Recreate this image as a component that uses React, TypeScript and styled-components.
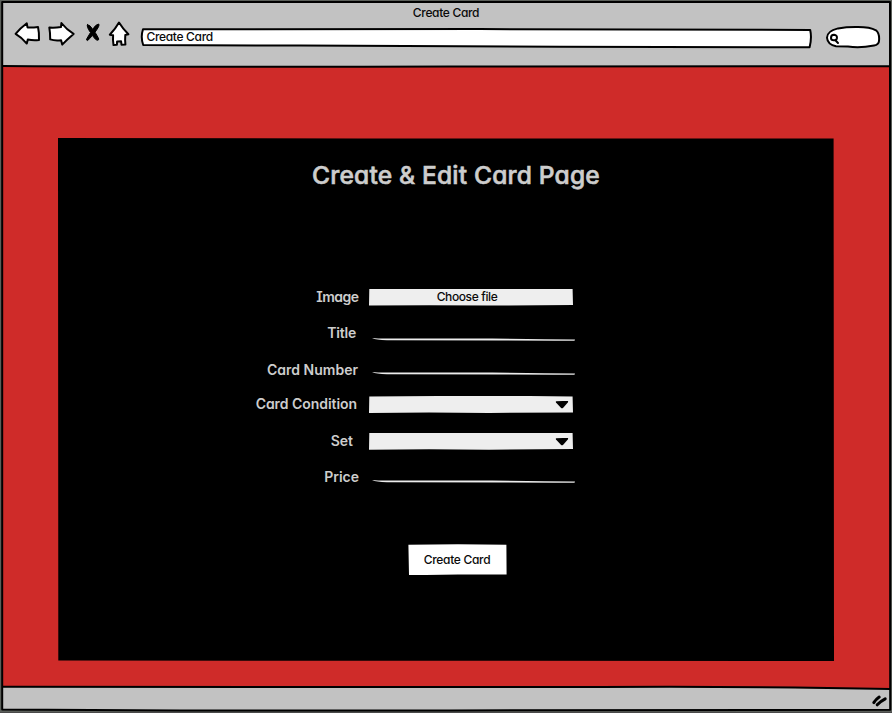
import React from "react";
import styled, { createGlobalStyle } from "styled-components";

const GlobalStyle = createGlobalStyle`
  *, *::before, *::after { box-sizing: border-box; }
  body {
    margin: 0;
    overflow: hidden;
    background: #5b5f5a;
    color: #0a0a0a;
    font-family: Inter, sans-serif;
    font-feature-settings: "cv11", "cv08";
  }
`;

const Browser = styled.div`
  position: relative;
  display: flex;
  flex-direction: column;
  width: 892px;
  height: 713px;
  padding: 1px 2px 2px;
  border-bottom: 1px solid #4a4a4a;
`;

const Outline = styled.svg`
  position: absolute;
  inset: 0;
  width: 100%;
  height: 100%;
  overflow: visible;
  fill: none;
  stroke: #000;
  stroke-linecap: round;
  stroke-linejoin: round;
  pointer-events: none;
`;

const Chrome = styled.header`
  height: 65px;
  background: #c2c2c2;
`;

const WindowTitle = styled.div`
  height: 22px;
  padding-top: 1px;
  text-align: center;
  font-size: 12px;
  font-weight: 450;
  line-height: 21px;
  letter-spacing: -0.33px;
`;

const Toolbar = styled.div`
  display: flex;
  align-items: flex-start;
  padding: 0 9px 0 12px;
`;

const NavIcon = styled.svg<{ $width: number }>`
  flex: none;
  width: ${(p) => p.$width}px;
  height: 28px;
  margin-top: -3px;
  fill: #fff;
  stroke: #000;
  stroke-width: 2;
  stroke-linejoin: round;
  stroke-linecap: round;
`;

const AddressBar = styled.div`
  position: relative;
  width: 671px;
  height: 20px;
  margin: 5px 0 0 8px;
  padding-left: 5.5px;
  font-size: 12px;
  font-weight: 450;
  line-height: 18px;
  letter-spacing: -0.33px;
`;

const AddressText = styled.span`
  position: relative;
`;

const SearchBox = styled.svg`
  flex: none;
  width: 56px;
  height: 24px;
  margin: 2px 0 0 13px;
  fill: #fff;
  stroke: #000;
  stroke-width: 2;
  stroke-linejoin: round;
  stroke-linecap: round;
`;

const Page = styled.main`
  flex: 1;
  display: flex;
  padding: 72px 56px 26px;
  background: #cf2b29;
`;

const Panel = styled.section`
  flex: 1;
  display: flex;
  flex-direction: column;
  align-items: center;
  background: #000;
  clip-path: polygon(0 0, 300px 0.4px, 775.6px 0.6px, 100% 100%, 300px 522.7px, 0.3px 522.5px);
`;

const Heading = styled.h1`
  margin: 22px 0 0 20px;
  color: #cdcdcd;
  font-size: 24.6px;
  font-weight: 550;
  line-height: 30px;
  letter-spacing: 0.16px;
  -webkit-text-stroke: 0.6px #cdcdcd;
`;

const Form = styled.form`
  display: grid;
  grid-template-columns: 113px 220px;
  grid-template-rows: 36.4px 37px 33.6px 36.7px 36.7px 20px;
  margin: 98px 0 0 -67px;
`;

const Label = styled.label<{ $inset: number; $track?: number }>`
  padding-right: ${(p) => p.$inset}px;
  color: #cdcdcd;
  font-size: 14px;
  font-weight: 600;
  line-height: 17px;
  letter-spacing: ${(p) => p.$track ?? 0}px;
  text-align: right;
  white-space: nowrap;
`;

const Box = styled.div<{ $drop: number }>`
  display: flex;
  align-items: center;
  justify-content: flex-end;
  width: 204px;
  height: 17px;
  margin: ${(p) => p.$drop}px 0 0 10px;
  padding-right: 4px;
  background: #eee;
  clip-path: polygon(0.3px 0.4px, 70px 0, 160px 0, 203.6px 0.4px, 204px 16.4px, 120px 17px, 60px 16.6px, 0 17px);
`;

const FileBox = styled(Box)`
  justify-content: center;
  padding: 0 8px 2px 0;
  font-size: 12px;
  font-weight: 450;
  letter-spacing: -0.38px;
`;

const Caret = styled.svg`
  width: 14px;
  height: 9px;
`;

const Underline = styled.svg<{ $drop: number }>`
  width: 204px;
  height: 4px;
  margin: ${(p) => p.$drop}px 0 0 13px;
  fill: #ececec;
`;

const SubmitButton = styled.button`
  width: 99px;
  height: 31px;
  margin: 56px 0 0 23px;
  padding: 0 1px 0 0;
  border: 0;
  background: #fff;
  color: #0a0a0a;
  font: 450 12px/31px Inter, sans-serif;
  font-feature-settings: "cv11";
  letter-spacing: -0.3px;
  clip-path: polygon(0.4px 0.3px, 50px 0, 98.4px 0.3px, 98.6px 30.2px, 50px 30.2px, 1px 31px);
`;

const StatusBar = styled.footer`
  height: 23px;
  background: #cf2b29;

  &::after {
    content: "";
    display: block;
    height: 100%;
    background: #c2c2c2;
    clip-path: polygon(0 0, 75% 0, 100% 2px, 100% 100%, 0 100%);
  }
`;

const Dropdown = ({ drop }: { drop: number }) => (
  <Box $drop={drop}>
    <Caret viewBox="0 0 14 9">
      <path d="M1.2 1.2 Q7 .7 12.8 1.1 Q13.6 1.5 12.8 2.6 L8.2 7.8 Q7 8.8 5.9 7.8 L1 2.5 Q.4 1.5 1.2 1.2Z" />
    </Caret>
  </Box>
);

const Line = ({ drop }: { drop: number }) => (
  <Underline $drop={drop} viewBox="0 0 204 4">
    <path d="M0 .1 Q4 .7 10 .4 L120 .5 Q170 .9 203 1.5 L202.5 2.8 Q180 2.6 130 2.5 L15 2.2 Q4 2.1 0 .1Z" />
  </Underline>
);

export default function App() {
  return (
    <>
      <GlobalStyle />
      <Browser>
        <Chrome>
          <WindowTitle>Create Card</WindowTitle>
          <Toolbar>
            <NavIcon $width={34} viewBox="14 20 34 28">
              <path d="M15.6 33.8 Q20 28.5 26.8 23.3 L27.5 27.4 Q33 27.6 38 26.9 Q39.3 33 39 40 Q33 40.5 27.8 39.6 L26.8 43.6 Q22 37.5 15.6 33.8Z" />
            </NavIcon>
            <NavIcon $width={36} viewBox="48 20 36 28">
              <path d="M49.3 27.6 Q55 28 61 27.1 L61.4 23 Q66.5 29.5 73.6 33.9 Q67.5 39 62.2 44.6 L61.1 40.2 Q55 41 50.2 39.4 Q50.3 33 49.3 27.6Z" />
            </NavIcon>
            <NavIcon $width={24} viewBox="84 20 24 28">
              <path
                fill="#000"
                strokeWidth="1"
                d="M87.4 24.7 Q89.8 24.4 92.7 29.3 Q95.8 24.2 98.7 24 Q100.2 25.4 95 32.2 Q97.2 35.6 98.8 39 Q98.4 41.4 95.5 39.3 Q93.7 37.4 92.3 35.3 Q89.9 39 87.4 40.6 Q86 40.3 86.8 38.7 L90.5 32.5 Q86.2 26.5 87.4 24.7Z"
              />
            </NavIcon>
            <NavIcon $width={25} viewBox="108 20 25 28">
              <path d="M119 22.6 Q122.8 28.8 128.4 34.3 L125.3 34.9 Q124.9 40 125.4 44.6 L121.5 44.7 L121.1 41.3 L117.1 41.4 L116.9 44.7 L113.5 45 Q112.7 40 113.1 35.2 L109.8 34.7 Q115.4 29 119 22.6Z" />
            </NavIcon>
            <AddressBar>
              <Outline viewBox="141 28 671 20">
                <path
                  fill="#fff"
                  strokeWidth="2"
                  d="M143 29.2 Q300 28.5 480 29.1 Q650 29.8 810.2 30 Q812 38 809.6 47.3 Q700 47.3 560 46.8 L300 45.6 L143.2 45 Q140.4 37 143 29.2Z"
                />
              </Outline>
              <AddressText>Create Card</AddressText>
            </AddressBar>
            <SearchBox viewBox="825 25 56 24">
              <path d="M827 37.8 Q827 31 838 28.4 Q847 26.8 858 27 Q870 27 876 30.3 Q879.8 33.5 879 41 Q878.8 44.6 874 45.6 Q860 48.3 848 46.6 L836 46.3 Q827.5 44.5 827 37.8Z" />
              <path d="M831 38 Q831 34.8 834 34.8 Q837.5 35.2 836.9 38.3 Q836.4 40.6 833.8 40.3 Q831 40.2 831 38Z M835.4 40.2 L838 43" />
            </SearchBox>
          </Toolbar>
        </Chrome>
        <Page>
          <Panel>
            <Heading>Create &amp; Edit Card Page</Heading>
            <Form>
              <Label $inset={0.5} $track={-0.55}>Image</Label>
              <FileBox $drop={0.6}>Choose file</FileBox>
              <Label $inset={3} $track={-0.2}>Title</Label>
              <Line drop={13.6} />
              <Label $inset={1}>Card Number</Label>
              <Line drop={10.7} />
              <Label $inset={2} $track={-0.05}>Card Condition</Label>
              <Dropdown drop={1} />
              <Label $inset={6}>Set</Label>
              <Dropdown drop={1} />
              <Label $inset={0}>Price</Label>
              <Line drop={12} />
            </Form>
            <SubmitButton type="button">Create Card</SubmitButton>
          </Panel>
        </Page>
        <StatusBar />
        <Outline viewBox="0 0 892 712" preserveAspectRatio="none" strokeWidth="2">
          <path d="M2.2 2 Q450 1.6 890 2.1 Q890.8 300 890.2 709.8 Q650 710.8 450 710.4 L180 710.4 L2.2 709.4 Q1.6 300 2.2 2Z" />
          <path d="M3 65.9 Q200 67.2 450 66.5 L890 66.3" />
          <path d="M3 686.8 Q300 688 600 687 Q760 686.2 890 689" />
          <path strokeWidth="3" d="M873.8 702.6 Q876 699.2 879.2 697 M877.2 704.8 Q880.2 701.4 885.2 698.8" />
        </Outline>
      </Browser>
    </>
  );
}
